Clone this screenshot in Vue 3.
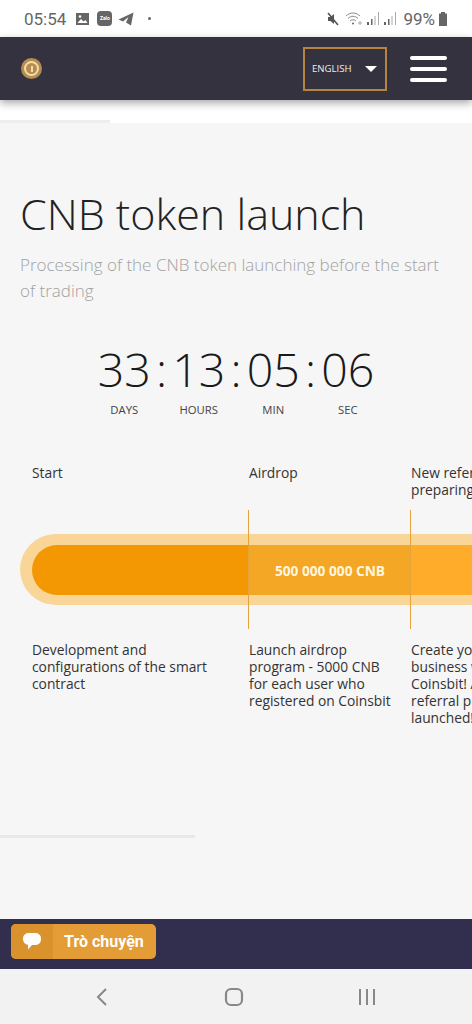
<script setup>
const timer = [
  { value: '33', label: 'DAYS' },
  { value: '13', label: 'HOURS' },
  { value: '05', label: 'MIN' },
  { value: '06', label: 'SEC' },
]

const stages = [
  { title: 'Start', text: 'Development and configurations of the smart contract', width: 217 },
  { title: 'Airdrop', text: 'Launch airdrop program - 5000 CNB for each user who registered on Coinsbit', width: 162 },
  { title: 'New referral preparing', text: 'Create your business with Coinsbit! A referral program launched!', width: 130 },
]
</script>

<template>
  <div class="phone">
    <div class="status">
      <div class="status-left">
        <span class="clock">05:54</span>
        <svg class="ic" width="15" height="14" viewBox="0 0 15 14"><path d="M1 1h13v12H1z" fill="#666" /><path d="M2.500 11l3.500-4 2.500 2.500 2-1.500 2 3z" fill="#fff" /><circle cx="5" cy="4.500" r="1.300" fill="#fff" /></svg>
        <span class="zalo">Zalo</span>
        <svg class="ic" width="16" height="14" viewBox="0 0 16 14"><path d="M0.500 7.500L15.500 0.500 13 13.500 8 10.500 10.500 5 5 9.500z" fill="#666" /></svg>
        <span class="dot"></span>
      </div>
      <div class="status-right">
        <svg class="mute" width="14" height="14" viewBox="0 0 14 14"><path d="M2 5h2.500L8 2v10L4.500 9H2z" fill="#555" /><path d="M2 1l10 12" stroke="#555" stroke-width="1.600" /></svg>
        <svg width="18" height="15" viewBox="0 0 18 15" fill="none" stroke="#888" stroke-width="1"><path d="M1 5c4-4 10-4 14 0M3 7.500c3-3 7-3 10 0M5 10c2-1.600 4-1.600 6 0" /><circle cx="8" cy="12.500" r="1" fill="#666" stroke="none" /><path d="M13 12h4M15 10v4" stroke="#aaa" /></svg>
        <svg class="sig" width="14" height="13" viewBox="0 0 14 13"><path d="M1 10h2v3H1zM5 7h1.500v6H5z" fill="#666" /><path d="M8.500 4h1v9h-1zM12 0h1v13h-1z" fill="#aaa" /></svg>
        <svg class="sig" width="14" height="13" viewBox="0 0 14 13"><path d="M1 10h2v3H1zM5 7h1.500v6H5z" fill="#666" /><path d="M8.500 4h1v9h-1zM12 0h1v13h-1z" fill="#aaa" /></svg>
        <span class="battery-text">99%</span>
        <svg width="10" height="14" viewBox="0 0 10 14"><path d="M3 0h4v1.500h2V14H1V1.500h2z" fill="#666" /></svg>
      </div>
    </div>

    <header class="header">
      <div class="logo"><span></span></div>
      <div class="lang">
        <span>ENGLISH</span>
        <i class="caret"></i>
      </div>
      <div class="burger"><span></span><span></span><span></span></div>
    </header>

    <div class="strip"><div class="strip-bar"></div></div>

    <main class="main">
      <h1>CNB token launch</h1>
      <p class="sub">Processing of the CNB token launching before the start of trading</p>

      <div class="timer">
        <template v-for="(item, i) in timer" :key="item.label">
          <span v-if="i" class="colon">:</span>
          <div class="cell">
            <div class="num">{{ item.value }}</div>
            <div class="lbl">{{ item.label }}</div>
          </div>
        </template>
      </div>

      <section class="timeline">
        <div class="row titles">
          <div v-for="s in stages" :key="s.title" class="col" :style="{ width: s.width + 'px' }">{{ s.title }}</div>
        </div>
        <div class="track">
          <div class="seg seg1"></div>
          <div class="seg seg2">500 000 000 CNB</div>
          <div class="seg seg3"></div>
          <i class="tick tick1"></i>
          <i class="tick tick2"></i>
        </div>
        <div class="row texts">
          <div v-for="s in stages" :key="s.title" class="col" :style="{ width: s.width + 'px' }">{{ s.text }}</div>
        </div>
      </section>

      <div class="bottom-bar"></div>
    </main>

    <div class="chat-band">
      <div class="chat">
        <div class="chat-ic">
          <svg width="20" height="19" viewBox="0 0 20 19"><path d="M7 1h6c4 0 6 2.500 6 6s-2 6-6 6H10l-4 4.500v-4.700C3 12.500 1 10.500 1 7s2-6 6-6z" fill="#fff" /></svg>
        </div>
        <span>Trò chuyện</span>
      </div>
    </div>

    <nav class="nav">
      <svg width="14" height="20" viewBox="0 0 14 20" fill="none" stroke="#888" stroke-width="2"><path d="M11 2L3 10l8 8" /></svg>
      <svg width="20" height="20" viewBox="0 0 20 20" fill="none" stroke="#888" stroke-width="2.200"><rect x="2" y="2" width="16" height="16" rx="5" /></svg>
      <svg width="18" height="18" viewBox="0 0 18 18" fill="#888"><path d="M1 1h2v16H1zM8 1h2v16H8zM15 1h2v16h-2z" /></svg>
    </nav>
  </div>
</template>

<style>
html, body {
  margin: 0;
  background: #f6f6f6;
}
</style>

<style scoped>
.phone {
  width: 472px;
  height: 1024px;
  overflow: hidden;
  display: flex;
  flex-direction: column;
  font-family: "Open Sans", "Noto Sans", sans-serif;
  color: #222;
}

.status {
  height: 37px;
  background: #fff;
  display: flex;
  justify-content: space-between;
  align-items: center;
  padding: 0 24px 0 24px;
  color: #666;
  box-sizing: border-box;
}
.status-left, .status-right {
  display: flex;
  align-items: center;
}
.clock {
  font-family: Roboto, sans-serif;
  font-size: 17px;
  margin-right: 9px;
}
.ic {
  margin-right: 7px;
}
.zalo {
  width: 15px;
  height: 15px;
  background: #666;
  color: #fff;
  border-radius: 4px;
  font-size: 5px;
  font-weight: 700;
  text-align: center;
  line-height: 15px;
  margin-right: 6px;
  font-family: Roboto, sans-serif;
}
.dot {
  width: 3px;
  height: 3px;
  border-radius: 50%;
  background: #666;
  margin-left: 7px;
}
.status-right {
  gap: 3px;
}
.status-right .mute {
  margin-right: 2px;
}
.battery-text {
  font-family: Roboto, sans-serif;
  font-size: 17px;
  margin-left: 3px;
}

.header {
  height: 63px;
  flex: none;
  background: #35323f;
  display: flex;
  align-items: center;
  padding: 0 25px 0 21px;
  box-shadow: 0 3px 8px rgba(0, 0, 0, 0.35);
  position: relative;
  z-index: 1;
  box-sizing: border-box;
}
.logo {
  width: 21px;
  height: 21px;
  border-radius: 50%;
  background: #b58d52;
  display: flex;
  align-items: center;
  justify-content: center;
}
.logo span {
  width: 15px;
  height: 15px;
  box-sizing: border-box;
  border-radius: 50%;
  border: 2px solid #f5dca6;
  position: relative;
  display: block;
}
.logo span::after {
  content: '';
  position: absolute;
  left: 4.500px;
  top: 2.500px;
  width: 2px;
  height: 6px;
  background: #f5dca6;
}
.lang {
  margin-left: auto;
  width: 84px;
  height: 44px;
  box-sizing: border-box;
  border: 2px solid #b5853f;
  display: flex;
  align-items: center;
  padding-left: 7px;
  color: #eee;
  font-size: 9.600px;
}
.caret {
  margin-left: 13px;
  width: 0;
  height: 0;
  border-left: 6px solid transparent;
  border-right: 6px solid transparent;
  border-top: 6px solid #fff;
}
.burger {
  margin-left: 23px;
  width: 37px;
  display: flex;
  flex-direction: column;
  gap: 7px;
}
.burger span {
  height: 4px;
  border-radius: 2px;
  background: #fff;
}

.strip {
  height: 23px;
  flex: none;
  background: #fff;
  display: flex;
  align-items: flex-end;
}
.strip-bar {
  width: 110px;
  height: 3px;
  background: #eee;
}

.main {
  flex: 1;
  background: #f6f6f6;
  overflow: hidden;
  padding-top: 65px;
}
h1 {
  margin: 0 0 0 20px;
  font-size: 43px;
  font-weight: 300;
  line-height: 52px;
  color: #222;
}
.sub {
  margin: 12px 20px 0;
  font-size: 17px;
  font-weight: 300;
  line-height: 26px;
  color: #a2a2a2;
}
.timer {
  display: flex;
  justify-content: center;
  margin-top: 34px;
}
.cell {
  width: 60px;
  text-align: center;
}
.num {
  font-size: 46.500px;
  font-weight: 300;
  line-height: 62px;
  color: #1a1a1a;
}
.colon {
  width: 14.500px;
  text-align: center;
  font-size: 46.500px;
  font-weight: 300;
  line-height: 62px;
  color: #1a1a1a;
}
.lbl {
  font-size: 11.300px;
  line-height: 16px;
  margin-top: 2px;
  color: #444;
}

.timeline {
  margin-top: 46px;
}
.row {
  display: flex;
  padding-left: 32px;
  font-size: 13.800px;
  line-height: 17px;
  color: #333;
}
.col {
  flex: none;
  box-sizing: border-box;
  padding-right: 14px;
}
.titles {
  height: 70px;
}
.track {
  position: relative;
  margin-left: 20px;
  height: 71px;
  box-sizing: border-box;
  background: #f9d698;
  border-radius: 36px 0 0 36px;
  padding: 11px 0 10px 12px;
  display: flex;
}
.seg1 {
  width: 216px;
  background: #f39803;
  border-radius: 25px 0 0 25px;
}
.seg2 {
  width: 162px;
  padding-left: 2px;
  box-sizing: border-box;
  background: #f4a724;
  color: #fff6df;
  font-size: 13.700px;
  font-weight: 700;
  display: flex;
  align-items: center;
  justify-content: center;
}
.seg3 {
  flex: 1;
  background: #feac2a;
}
.tick {
  position: absolute;
  top: -24px;
  bottom: -24px;
  width: 1.500px;
  background: #e5a33c;
}
.tick1 {
  left: 227.500px;
}
.tick2 {
  left: 389.500px;
}
.texts {
  margin-top: 36px;
  height: 131px;
}
.bottom-bar {
  margin-top: 63px;
  width: 195px;
  height: 3px;
  background: #e8e8e8;
}

.chat-band {
  height: 50px;
  flex: none;
  background: #322e4d;
  padding: 5px 0 0 11px;
  box-sizing: border-box;
}
.chat {
  width: 145px;
  height: 35px;
  border-radius: 5px;
  background: #e49c37;
  display: flex;
  align-items: center;
  color: #fff;
  overflow: hidden;
  font-family: Roboto, sans-serif;
  font-weight: 700;
  font-size: 16px;
}
.chat-ic {
  width: 42px;
  height: 100%;
  background: #d9922c;
  display: flex;
  align-items: center;
  justify-content: center;
  margin-right: 11px;
}

.nav {
  height: 55px;
  flex: none;
  background: #f2f2f2;
  display: flex;
  align-items: center;
  padding: 0 96px 0 95px;
  justify-content: space-between;
  box-sizing: border-box;
}
</style>
